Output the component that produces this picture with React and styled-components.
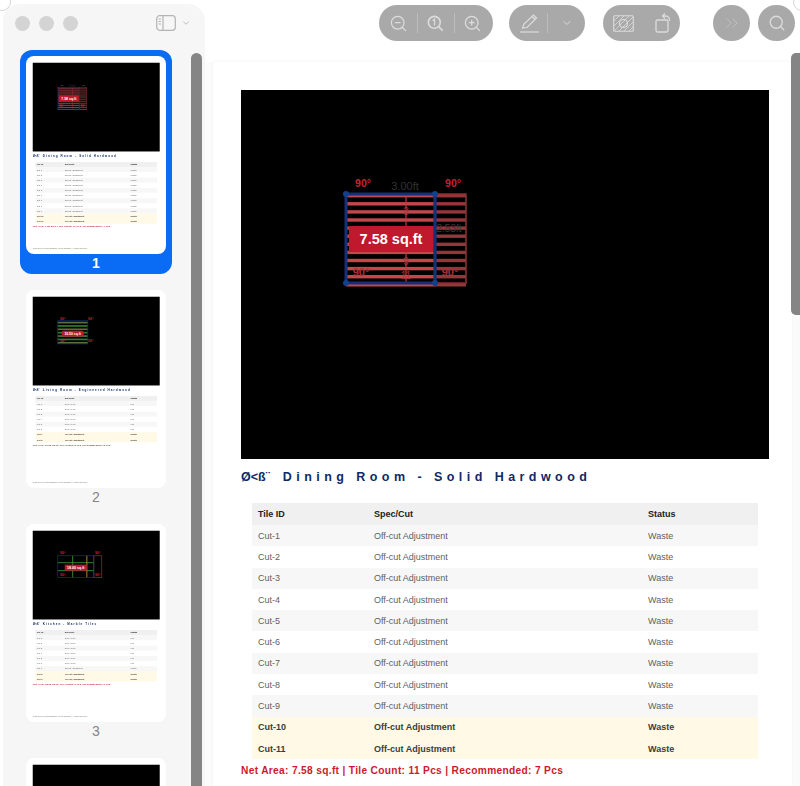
import styled, { createGlobalStyle } from 'styled-components'
import { ChevronDown, ChevronsRight, Search, ZoomIn, ZoomOut } from 'lucide-react'

const GlobalStyle = createGlobalStyle`
    html, body {
        margin: 0;
        padding: 0;
        height: 100%;
        background: #ffffff;
        font-family: "Liberation Sans", Arial, sans-serif;
    }
`

const Shell = styled.div`
    position: relative;
    display: flex;
    width: 800px;
    height: 786px;
    overflow: hidden;
    box-sizing: border-box;
    padding: 4px 0 0 3px;

    &::before, &::after {
        content: '';
        position: absolute;
        top: -7px;
        width: 16px;
        height: 16px;
        border: 1px solid #d6d6d6;
        border-radius: 50%;
    }
    &::before { left: -7px; }
    &::after { right: -11px; }
`

const Sidebar = styled.aside`
    display: flex;
    flex-direction: column;
    flex: 0 0 202px;
    background: #f6f6f6;
    border-radius: 17px 17px 0 0;
    overflow: hidden;
`

const SideHeader = styled.div`
    display: flex;
    align-items: center;
    flex: 0 0 46px;
    padding: 0 12px 8px 12px;
    box-sizing: border-box;
`

const Light = styled.span`
    width: 15px;
    height: 15px;
    border-radius: 50%;
    background: #d4d4d4;
    margin-right: 9px;
`

const SideToggle = styled.div`
    display: flex;
    align-items: center;
    gap: 5px;
    margin-left: auto;
    margin-right: 2px;
    color: #b4b4b4;
`

const SideBody = styled.div`
    display: flex;
    flex: 1;
    min-height: 0;
`

const ThumbList = styled.div`
    display: flex;
    flex-direction: column;
    flex: 0 0 186px;
    padding: 0 0 0 17px;
    box-sizing: border-box;
    overflow: hidden;
    gap: 10px;
`

const ThumbItem = styled.div`
    display: flex;
    flex-direction: column;
    align-items: center;
    flex: none;
    width: 152px;
    height: 224px;
    box-sizing: border-box;
    padding-top: 6px;
    border-radius: 12px;
    background: ${p => (p.$active ? '#0a6cf5' : 'transparent')};
`

const ThumbPage = styled.div`
    width: 140px;
    height: 198px;
    flex: none;
    background: #fff;
    border-radius: 8px;
    overflow: hidden;
`

const ThumbScale = styled.div`
    width: 582px;
    height: 823px;
    transform: scale(0.2405);
    transform-origin: 0 0;
`

const ThumbLabel = styled.div`
    margin-top: 1px;
    font-size: 14px;
    line-height: 17px;
    font-weight: ${p => (p.$active ? 700 : 400)};
    color: ${p => (p.$active ? '#ffffff' : '#858585')};
`

const ScrollTrack = styled.div`
    flex: 0 0 16px;
    padding: 3px 0 0 2px;
    box-sizing: border-box;
`

const ScrollThumb = styled.div`
    width: 11px;
    height: 100%;
    background: #858585;
    border-radius: 6px 6px 0 0;
`

const Main = styled.main`
    display: flex;
    flex-direction: column;
    flex: 1;
    min-width: 0;
`

const Toolbar = styled.div`
    display: flex;
    align-items: flex-start;
    flex: 0 0 58px;
    padding: 1px 0 0 174px;
    box-sizing: border-box;
`

const Pill = styled.div`
    display: flex;
    align-items: center;
    justify-content: ${p => (p.$round ? 'center' : 'flex-start')};
    gap: ${p => p.$inner || 0}px;
    height: 36px;
    width: ${p => p.$w}px;
    margin-right: ${p => p.$gap}px;
    flex: none;
    padding-left: ${p => (p.$round ? 0 : 10)}px;
    box-sizing: border-box;
    border-radius: 18px;
    background: #a9a9a9;
    color: ${p => p.$ink || '#dcdcdc'};
`

const Divider = styled.span`
    width: 1px;
    height: 20px;
    background: #bdbdbd;
`

const MenuChevron = styled(ChevronDown)`
    margin-left: 6px;
`

const Viewer = styled.div`
    display: flex;
    flex: 1;
    min-height: 0;
    padding-left: 8px;
    background: #fbfbfb;
`

const MainPage = styled.div`
    flex: 0 0 579px;
    background: #fff;
    box-shadow: 0 -1px 3px rgba(0, 0, 0, 0.04);
    border-radius: 3px 3px 0 0;
    overflow: hidden;
`

const RightScroll = styled.div`
    flex: 0 0 9px;
    margin-left: -1px;
    margin-top: -9px;
    height: 262px;
    background: #858585;
    border-radius: 5px 0 0 5px;
`

const Sheet = styled.div`
    padding: 28px 0 0 28px;
    height: 100%;
    box-sizing: border-box;
    position: relative;
`

const Canvas = styled.svg`
    display: block;
    width: 528px;
    height: 369px;
    background: #000;
`

const Title = styled.h1`
    margin: 11px 0 0;
    font-size: 12.5px;
    line-height: 15px;
    font-weight: 700;
    letter-spacing: 4.45px;
    color: #0d2a66;
    white-space: nowrap;
`

const TitleMark = styled.span`
    letter-spacing: 0;
    margin-right: 5px;
`

const Table = styled.table`
    width: 506px;
    margin: 18px 0 0 11px;
    border-collapse: collapse;
    table-layout: fixed;
    font-size: 9px;
`

const Th = styled.th`
    height: 22px;
    padding: 0 6px;
    box-sizing: border-box;
    text-align: left;
    font-weight: 700;
    color: #222;
    background: #f0f0f0;
    width: ${p => p.$w}px;
`

const Tr = styled.tr`
    height: 21.3px;
    background: ${p => (p.$waste ? '#fff9e6' : p.$odd ? '#f7f7f7' : '#ffffff')};
    color: ${p => (p.$waste ? '#3c3c3c' : '#5f5f5f')};
    font-weight: ${p => (p.$waste ? 700 : 400)};
`

const Td = styled.td`
    padding: 0 6px;
`

const Summary = styled.p`
    margin: 5px 0 0;
    font-size: 10.2px;
    line-height: 13px;
    font-weight: 700;
    letter-spacing: 0.32px;
    color: #cc1a2d;
`

const Footnote = styled.div`
    position: absolute;
    left: 28px;
    bottom: 18px;
    font-size: 7px;
    color: #777;
`

const mark = 'Ø<ß¨'

const cutRows = n => Array.from({ length: n }, (_, i) => [`Cut-${i + 1}`, 'Off-cut Adjustment', 'Waste'])

const fullRows = (n, spec) => Array.from({ length: n }, (_, i) => [`Full-${i + 1}`, spec, 'Full'])

const pages = [
    {
        title: 'Dining Room - Solid Hardwood',
        plan: 'strips',
        rows: cutRows(11),
        accent: 9,
        summary: 'Net Area: 7.58 sq.ft | Tile Count: 11 Pcs | Recommended: 7 Pcs',
    },
    {
        title: 'Living Room - Engineered Hardwood',
        plan: 'planks',
        rows: [...fullRows(6, '3.00 x 1.00'), ...cutRows(2)],
        accent: 6,
        summary: 'Net Area: 10.50 sq.ft | Tile Count: 8 Pcs | Recommended: 8 Pcs',
    },
    {
        title: 'Kitchen - Marble Tiles',
        plan: 'grid',
        rows: [...fullRows(6, '2.00 x 2.00'), ...cutRows(3)],
        accent: 7,
        summary: 'Net Area: 18.00 sq.ft | Tile Count: 9 Pcs | Recommended: 6 Pcs',
    },
    { title: 'Page 4', canvasOnly: true },
]

function StripPlan() {
    const ys = Array.from({ length: 12 }, (_, i) => 104 + i * 8.1)
    return (
        <>
            {ys.map(y => (
                <g key={y}>
                    <rect x="105" y={y} width="89" height="3.4" fill="#c4474c" />
                    <rect x="194" y={y} width="31" height="3.4" fill="#96353a" />
                </g>
            ))}
            <rect x="194" y="104" width="31" height="89" fill="none" stroke="#8f2f36" strokeWidth="1.5" />
            <line x1="165" y1="104" x2="165" y2="193" stroke="#c23a44" strokeWidth="1.2" />
            <rect x="108" y="136" width="85" height="26" fill="#c0182c" />
            <text x="150" y="154" textAnchor="middle" fill="#fff" fontSize="14.5" fontWeight="700">7.58 sq.ft</text>
            <rect x="105" y="104" width="89" height="89" fill="none" stroke="#14307a" strokeWidth="3" />
            <line x1="194" y1="104" x2="194" y2="193" stroke="#14307a" strokeWidth="2.5" />
            {[[105, 104], [194, 104], [105, 193], [194, 193]].map(([x, y]) => (
                <circle key={`${x}-${y}`} cx={x} cy={y} r="3" fill="#14408a" />
            ))}
            <text x="122" y="97" textAnchor="middle" fill="#c8232f" fontSize="10.500" fontWeight="700">90°</text>
            <text x="212" y="97" textAnchor="middle" fill="#c8232f" fontSize="10.500" fontWeight="700">90°</text>
            <text x="164" y="100" textAnchor="middle" fill="#333" fontSize="11">3.00ft</text>
            <text x="120" y="186" textAnchor="middle" fill="#a8323a" fontSize="11" fontWeight="700">90°</text>
            <text x="209" y="186" textAnchor="middle" fill="#a8323a" fontSize="11" fontWeight="700">90°</text>
            <text x="208" y="142" textAnchor="middle" fill="#3a3a3a" fontSize="10">2.53ft</text>
            <text x="165" y="125" textAnchor="middle" fill="#a8323a" fontSize="10">3</text>
            <text x="165" y="175" textAnchor="middle" fill="#a8323a" fontSize="10">9</text>
            <text x="165" y="189" textAnchor="middle" fill="#a8323a" fontSize="10">11</text>
        </>
    )
}

function PlankPlan() {
    const ys = Array.from({ length: 7 }, (_, i) => 104 + i * 14)
    return (
        <>
            {ys.map((y, i) => (
                <rect key={y} x="104" y={y} width="125" height="7" fill={i % 2 ? '#2f7a2c' : '#5e6e3c'} />
            ))}
            <rect x="120" y="141" width="92" height="24" rx="9" fill="#c0182c" />
            <text x="166" y="158" textAnchor="middle" fill="#fff" fontSize="14" fontWeight="700">10.50 sq.ft</text>
            <rect x="104" y="100" width="125" height="96" fill="none" stroke="#14307a" strokeWidth="3" />
            <text x="125" y="96" textAnchor="middle" fill="#c8232f" fontSize="15" fontWeight="700">90°</text>
            <text x="241" y="96" textAnchor="middle" fill="#c8232f" fontSize="15" fontWeight="700">90°</text>
            <text x="125" y="188" textAnchor="middle" fill="#c8232f" fontSize="15" fontWeight="700">90°</text>
            <text x="241" y="188" textAnchor="middle" fill="#c8232f" fontSize="15" fontWeight="700">90°</text>
        </>
    )
}

function GridPlan() {
    return (
        <>
            <rect x="104" y="131" width="150" height="4" fill="#2f8a2c" />
            <rect x="104" y="164" width="150" height="4" fill="#2f8a2c" />
            <line x1="166" y1="104" x2="166" y2="195" stroke="#2f8a2c" strokeWidth="4" />
            <line x1="225" y1="104" x2="225" y2="195" stroke="#b98a2e" strokeWidth="4" />
            <rect x="104" y="104" width="150" height="91" fill="none" stroke="#14307a" strokeWidth="3" />
            <rect x="254" y="104" width="33" height="91" fill="none" stroke="#8f2f36" strokeWidth="3" />
            <rect x="133" y="141" width="92" height="25" fill="#c0182c" />
            <text x="179" y="159" textAnchor="middle" fill="#fff" fontSize="15" fontWeight="700">18.00 sq.ft</text>
            <text x="125" y="96" textAnchor="middle" fill="#c8232f" fontSize="15" fontWeight="700">90°</text>
            <text x="270" y="96" textAnchor="middle" fill="#c8232f" fontSize="15" fontWeight="700">90°</text>
            <text x="125" y="188" textAnchor="middle" fill="#c8232f" fontSize="15" fontWeight="700">90°</text>
            <text x="270" y="188" textAnchor="middle" fill="#c8232f" fontSize="15" fontWeight="700">90°</text>
        </>
    )
}

const plans = { strips: StripPlan, planks: PlankPlan, grid: GridPlan }

function PageSheet({ page, footnote }) {
    if (page.canvasOnly) {
        return (
            <Sheet>
                <Canvas viewBox="0 0 528 369" />
            </Sheet>
        )
    }
    const Plan = plans[page.plan]
    return (
        <Sheet>
            <Canvas viewBox="0 0 528 369">
                <Plan />
            </Canvas>
            <Title><TitleMark>{mark}</TitleMark> {page.title}</Title>
            <Table>
                <thead>
                    <tr>
                        <Th $w={116}>Tile ID</Th>
                        <Th $w={274}>Spec/Cut</Th>
                        <Th $w={116}>Status</Th>
                    </tr>
                </thead>
                <tbody>
                    {page.rows.map((row, i) => (
                        <Tr key={row[0]} $odd={i % 2 === 0} $waste={i >= page.accent}>
                            {row.map(cell => <Td key={cell}>{cell}</Td>)}
                        </Tr>
                    ))}
                </tbody>
            </Table>
            <Summary>{page.summary}</Summary>
            {footnote && <Footnote>Generated by Flooring Estimator | Layout Summary | All Rights Reserved</Footnote>}
        </Sheet>
    )
}

const SidebarIcon = () => (
    <svg width="20" height="16" viewBox="0 0 20 16" fill="none" stroke="currentColor" strokeWidth="1.2">
        <rect x="0.7" y="0.7" width="18.600" height="14.600" rx="3" />
        <line x1="7" y1="1" x2="7" y2="15" />
        <line x1="2.500" y1="4" x2="5" y2="4" />
        <line x1="2.500" y1="6.500" x2="5" y2="6.500" />
        <line x1="2.500" y1="9" x2="5" y2="9" />
    </svg>
)

const ZoomOneIcon = () => (
    <svg width="19" height="19" viewBox="0 0 24 24" fill="none" stroke="currentColor" strokeWidth="2">
        <circle cx="10.500" cy="10.500" r="7.500" />
        <line x1="21" y1="21" x2="16" y2="16" />
        <path d="M8.500 8.500 10.800 6.500v8" strokeWidth="1.600" />
    </svg>
)

const MarkupIcon = () => (
    <svg width="21" height="21" viewBox="0 0 21 21" fill="none" stroke="currentColor" strokeWidth="1.2">
        <path d="M3.500 15 5 11 14.500 2 17.500 5 8 14.500Z" />
        <path d="M13 3.500 16 6.500" />
        <line x1="1" y1="19" x2="20" y2="19" />
    </svg>
)

const HideImageIcon = () => (
    <svg width="21" height="17" viewBox="0 0 21 17" fill="none" stroke="currentColor" strokeWidth="1.100">
        <rect x="0.700" y="0.700" width="19.600" height="15.600" rx="1" />
        <circle cx="10.500" cy="8.500" r="4" />
        <path d="M1 6 6 1M1 11 11 1M1 16 16 1M6 16 20 2M11 16 20 7M16 16 20 12" strokeWidth="0.800" />
    </svg>
)

const RotateIcon = () => (
    <svg width="20" height="22" viewBox="0 0 20 22" fill="none" stroke="currentColor" strokeWidth="1.300">
        <rect x="4" y="8" width="12" height="12" rx="1.500" />
        <path d="M11 4h2.500a4 4 0 0 1 4 4v1" />
        <path d="M13 1.500 10.500 4 13 6.500" />
    </svg>
)

function App() {
    return (
        <>
            <GlobalStyle />
            <Shell>
                <Sidebar>
                    <SideHeader>
                        <Light />
                        <Light />
                        <Light />
                        <SideToggle>
                            <SidebarIcon />
                            <ChevronDown size={10} strokeWidth={2} />
                        </SideToggle>
                    </SideHeader>
                    <SideBody>
                        <ThumbList>
                            {pages.map((page, i) => (
                                <ThumbItem key={page.title} $active={i === 0}>
                                    <ThumbPage>
                                        <ThumbScale>
                                            <PageSheet page={page} footnote />
                                        </ThumbScale>
                                    </ThumbPage>
                                    {!page.canvasOnly && <ThumbLabel $active={i === 0}>{i + 1}</ThumbLabel>}
                                </ThumbItem>
                            ))}
                        </ThumbList>
                        <ScrollTrack>
                            <ScrollThumb />
                        </ScrollTrack>
                    </SideBody>
                </Sidebar>
                <Main>
                    <Toolbar>
                        <Pill $w={114} $gap={16} $inner={8.5}>
                            <ZoomOut size={19} strokeWidth={1.6} />
                            <Divider />
                            <ZoomOneIcon />
                            <Divider />
                            <ZoomIn size={19} strokeWidth={1.6} />
                        </Pill>
                        <Pill $w={76} $gap={18} $inner={7}>
                            <MarkupIcon />
                            <Divider />
                            <MenuChevron size={12} strokeWidth={2} />
                        </Pill>
                        <Pill $w={77} $gap={33} $inner={18}>
                            <HideImageIcon />
                            <RotateIcon />
                        </Pill>
                        <Pill $w={37} $gap={8} $round $ink="#c2c2c2">
                            <ChevronsRight size={20} strokeWidth={1.1} />
                        </Pill>
                        <Pill $w={37} $gap={0} $round>
                            <Search size={18} strokeWidth={1.7} />
                        </Pill>
                    </Toolbar>
                    <Viewer>
                        <MainPage>
                            <PageSheet page={pages[0]} />
                        </MainPage>
                        <RightScroll />
                    </Viewer>
                </Main>
            </Shell>
        </>
    )
}

export default App
